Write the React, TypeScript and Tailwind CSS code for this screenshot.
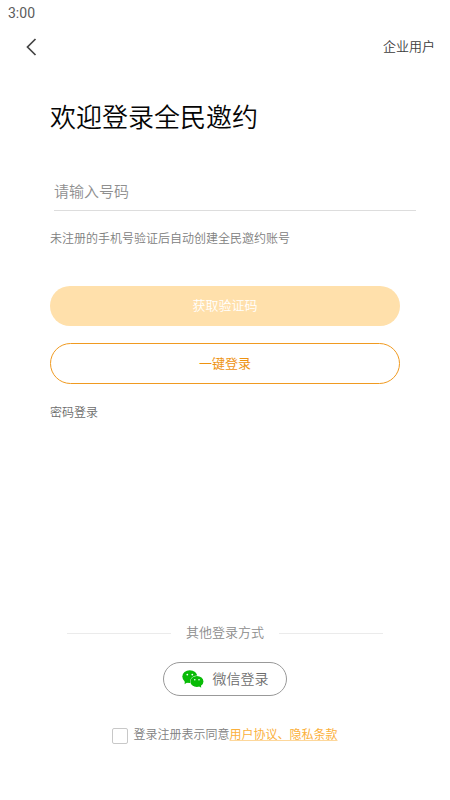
import React, { useState } from "react";

function WechatIcon() {
  return (
    <svg width="22" height="18" viewBox="0 0 22 18">
      <g fill="#09bb07">
        <path d="M3 10L2.6 14.2L6.5 11.5Z" />
        <ellipse cx="7.8" cy="6.6" rx="7.5" ry="6.4" />
      </g>
      <ellipse cx="14.9" cy="11.4" rx="6.8" ry="5.8" fill="#ffffff" />
      <ellipse cx="14.9" cy="11.4" rx="6.5" ry="5.5" fill="#09bb07" />
      <path d="M16 15.5L19.2 17.8L18.8 14.2Z" fill="#09bb07" />
      <g fill="#ffffff">
        <circle cx="5.3" cy="4.6" r="0.9" />
        <circle cx="10.3" cy="4.6" r="0.9" />
        <circle cx="12.8" cy="9.7" r="0.8" />
        <circle cx="17" cy="9.7" r="0.8" />
      </g>
    </svg>
  );
}

export default function App() {
  const [phone, setPhone] = useState("");
  const [agreed, setAgreed] = useState(false);

  return (
    <div className="w-[450px] h-[800px] bg-white flex flex-col overflow-hidden font-['Roboto','Noto_Sans_CJK_SC',sans-serif] font-[350]">
      {/* Status Bar */}
      <div className="h-[26px] pl-2 flex items-center">
        <span className="text-sm leading-none font-normal text-[#5c5c5c]">3:00</span>
      </div>

      {/* Header */}
      <header className="h-[42px] pl-[26px] pr-[15px] flex items-center justify-between">
        <button aria-label="返回">
          <svg width="11" height="18" viewBox="0 0 11 18" fill="none" stroke="#444444" strokeWidth="1.7">
            <path d="M9.5 1L1.5 9L9.5 17" />
          </svg>
        </button>
        <button className="text-[13px] leading-5 text-[#3c3c3c]">企业用户</button>
      </header>

      {/* Login Form */}
      <main className="px-[50px] pt-[30px] flex flex-col">
        <h1 className="text-[26px] leading-10 text-[#050505]">欢迎登录全民邀约</h1>

        <div className="mt-[39px] ml-1 w-[362px] h-[34px] border-b border-[#dddddd]">
          <input
            type="tel"
            value={phone}
            onChange={(e) => setPhone(e.target.value)}
            placeholder="请输入号码"
            className="block w-full h-[30px] text-[15px] text-[#333333] placeholder:text-[#8f8f8f] outline-none"
          />
        </div>
        <p className="mt-[18px] text-xs leading-5 text-[#808080]">未注册的手机号验证后自动创建全民邀约账号</p>

        <button className="mt-[36.5px] h-10 pt-px rounded-full bg-[#ffe0ab] text-[13px] text-white">获取验证码</button>
        <button className="mt-[17.5px] h-[41px] rounded-full border border-[#f09a20] text-[13px] font-normal text-[#ee9210]">
          一键登录
        </button>
        <button className="mt-[19px] self-start text-xs leading-5 text-[#6c6c6c]">密码登录</button>
      </main>

      {/* Other Login Methods */}
      <footer className="mt-auto pb-[55px] flex flex-col items-center">
        <div className="flex items-center">
          <span className="w-[104px] h-px bg-[#ebebeb]" />
          <span className="mx-[15px] text-[13px] leading-5 text-[#8c8c8c]">其他登录方式</span>
          <span className="w-[104px] h-px bg-[#ebebeb]" />
        </div>
        <button className="mt-[19px] w-[124px] h-[34px] rounded-full border border-[#999999] flex items-center justify-center">
          <WechatIcon />
          <span className="ml-[9px] text-sm leading-5 text-[#6c6c6c]">微信登录</span>
        </button>
        <div className="mt-[29px] flex items-center text-xs leading-5 text-[#808080]">
          <input
            type="checkbox"
            checked={agreed}
            onChange={(e) => setAgreed(e.target.checked)}
            className="w-4 h-4 mr-[5px] mt-px appearance-none rounded-[2px] border border-[#c8c8c8] checked:bg-[#ee9210]"
          />
          <span>登录注册表示同意</span>
          <a href="#" className="font-normal text-[#fbb03b] underline decoration-[#fdd79b] decoration-1 underline-offset-1">
            用户协议、隐私条款
          </a>
        </div>
      </footer>
    </div>
  );
}
